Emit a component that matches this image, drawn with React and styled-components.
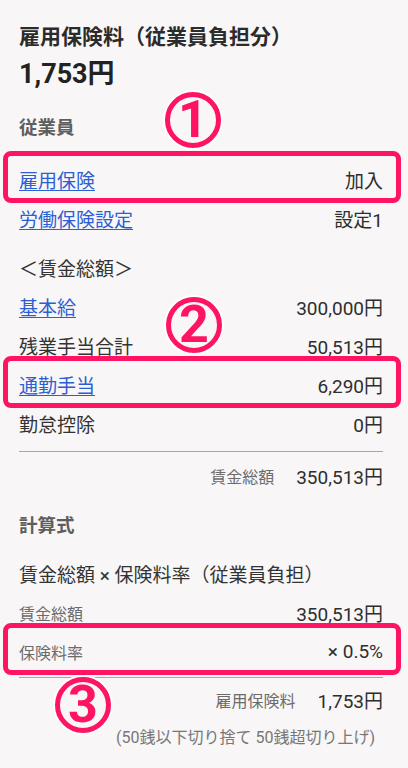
import React from "react";
import styled, { createGlobalStyle, css } from "styled-components";

const GlobalStyle = createGlobalStyle`
  html, body {
    margin: 0;
    padding: 0;
    background: #f8f6f7;
  }
  body {
    font-family: Roboto, "Noto Sans CJK JP", sans-serif;
    color: #333;
  }
`;

const PINK = "#ff1463";

const Page = styled.div`
  position: relative;
  width: 408px;
  height: 768px;
  box-sizing: border-box;
  padding: 23px 25px 0 19px;
  overflow: hidden;
`;

const Title = styled.h1`
  margin: 0;
  font-size: 21px;
  line-height: 28px;
  font-weight: 700;
  color: #2b2b2b;
`;

const Amount = styled.div`
  margin-top: 6px;
  font-size: 27px;
  line-height: 34px;
  font-weight: 700;
  color: #222;
`;

const SectionHead = styled.h2`
  margin: ${(p) => p.$mt || 0}px 0 0;
  font-size: 18.5px;
  line-height: 24px;
  font-weight: 700;
  color: #5e5e5e;
`;

const Row = styled.div`
  position: relative;
  display: flex;
  align-items: center;
  justify-content: ${(p) => (p.$end ? "flex-end" : "space-between")};
  height: 39px;
  margin-top: ${(p) => p.$mt || 0}px;
  font-size: 19px;
  color: #333;
  ${(p) =>
    p.$highlight &&
    css`
      &::after {
        content: "";
        position: absolute;
        left: -16px;
        right: -18px;
        top: -9px;
        bottom: -4px;
        border: 5px solid ${PINK};
        border-radius: 8px;
        pointer-events: none;
      }
    `}
`;

const Link = styled.a`
  color: #2d5fd2;
  text-decoration: underline;
  text-underline-offset: 2px;
  text-decoration-thickness: 1px;
  cursor: pointer;
`;

const Label = styled.span`
  font-size: ${(p) => (p.$small ? "16px" : "19px")};
  color: ${(p) => (p.$small ? "#6b6b6b" : "#333")};
`;

const Value = styled.span`
  font-size: ${(p) => p.$size || 19}px;
  color: #2e2e2e;
`;

const TotalLabel = styled.span`
  font-size: 16px;
  color: #6b6b6b;
  margin-right: 22px;
`;

const Divider = styled.hr`
  margin: ${(p) => p.$mt || 0}px 0 0;
  border: none;
  border-top: 1.5px solid #a8a8a8;
  height: 0;
`;

const Note = styled.div`
  margin-top: 9px;
  text-align: right;
  font-size: 16px;
  line-height: 20px;
  color: #777;
  padding-right: 8px;
`;

const Badge = styled.div`
  position: absolute;
  left: ${(p) => p.$x}px;
  top: ${(p) => p.$y}px;
  width: 46px;
  height: 46px;
  border: 5px solid ${PINK};
  border-radius: 50%;
  box-shadow: 0 0 0 2px #fff;
  display: flex;
  align-items: center;
  justify-content: center;
  color: ${PINK};
  font-family: Roboto, sans-serif;
  font-size: 52px;
  font-weight: 700;
  line-height: 1;
`;

export default function App() {
  return (
    <>
      <GlobalStyle />
      <Page>
        <Title>雇用保険料（従業員負担分）</Title>
        <Amount>1,753円</Amount>

        <SectionHead $mt={25}>従業員</SectionHead>
        <Row $mt={20} $highlight>
          <Link>雇用保険</Link>
          <Value>加入</Value>
        </Row>
        <Row>
          <Link>労働保険設定</Link>
          <Value>設定1</Value>
        </Row>

        <Row $mt={10}>
          <Label>＜賃金総額＞</Label>
        </Row>
        <Row>
          <Link>基本給</Link>
          <Value>300,000円</Value>
        </Row>
        <Row>
          <Label>残業手当合計</Label>
          <Value>50,513円</Value>
        </Row>
        <Row $highlight>
          <Link>通勤手当</Link>
          <Value>6,290円</Value>
        </Row>
        <Row>
          <Label>勤怠控除</Label>
          <Value>0円</Value>
        </Row>
        <Divider $mt={8} />
        <Row $end $mt={4}>
          <TotalLabel>賃金総額</TotalLabel>
          <Value>350,513円</Value>
        </Row>

        <SectionHead $mt={19}>計算式</SectionHead>
        <Row $mt={16}>
          <Label>賃金総額 × 保険料率（従業員負担）</Label>
        </Row>
        <Row>
          <Label $small>賃金総額</Label>
          <Value>350,513円</Value>
        </Row>
        <Row $highlight>
          <Label $small>保険料率</Label>
          <Value>× 0.5%</Value>
        </Row>
        <Divider $mt={6} />
        <Row $end $mt={2}>
          <TotalLabel>雇用保険料</TotalLabel>
          <Value>1,753円</Value>
        </Row>
        <Note>(50銭以下切り捨て 50銭超切り上げ)</Note>

        <Badge $x={165} $y={92}>1</Badge>
        <Badge $x={166} $y={297}>2</Badge>
        <Badge $x={55} $y={677}>3</Badge>
      </Page>
    </>
  );
}
